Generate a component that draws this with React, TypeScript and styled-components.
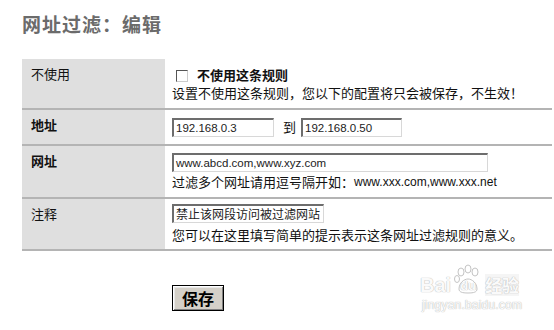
import React from "react";
import styled, { createGlobalStyle } from "styled-components";

const Global = createGlobalStyle`
  html, body {
    margin: 0;
    padding: 0;
    background: #fff;
  }
  body {
    font-family: "Noto Sans CJK SC", "Liberation Sans", sans-serif;
    font-size: 13px;
    color: #111;
  }
`;

const Page = styled.div`
  position: relative;
  width: 554px;
  height: 330px;
  overflow: hidden;
  padding: 12px 0 0 22px;
  box-sizing: border-box;
`;

const Title = styled.h1`
  margin: 0;
  font-size: 19px;
  line-height: 24px;
  font-weight: bold;
  color: #6b6b6b;
  letter-spacing: 1px;
`;

const Table = styled.div`
  margin-top: 23px;
  width: 530px;
`;

const Row = styled.div<{ $h: number }>`
  display: grid;
  grid-template-columns: 143px 1fr;
  height: ${(p) => p.$h}px;
  border-bottom: 2px solid #b4b4b4;
`;

const Label = styled.div<{ $bold?: boolean }>`
  background: #dfdfdf;
  padding: 7px 0 0 9px;
  line-height: 16px;
  font-size: 13px;
  font-weight: ${(p) => (p.$bold ? "bold" : "normal")};
`;

const Field = styled.div<{ $gap?: number }>`
  display: flex;
  flex-direction: column;
  justify-content: center;
  gap: ${(p) => p.$gap ?? 0}px;
  padding-left: 7px;
`;

const Line = styled.div`
  display: flex;
  align-items: center;
  line-height: 18px;
  white-space: nowrap;
`;

const Strong = styled.span`
  font-weight: bold;
`;

const Latin = styled.span`
  font-family: "Liberation Sans", Arial, sans-serif;
  font-size: 12px;
`;

const Check = styled.span`
  display: inline-block;
  width: 10px;
  height: 10px;
  margin: 2px 9px 0 4px;
  border-top: 1px solid #555;
  border-left: 1px solid #555;
  border-right: 1px solid #ccc;
  border-bottom: 1px solid #ccc;
  background: #fff;
`;

const Input = styled.div<{ $w: number; $cjk?: boolean }>`
  box-sizing: border-box;
  width: ${(p) => p.$w}px;
  height: 19px;
  padding: 0 2px;
  border-top: 2px solid #6d6d6d;
  border-left: 2px solid #6d6d6d;
  border-right: 1px solid #d8d8d8;
  border-bottom: 1px solid #d8d8d8;
  background: #fff;
  line-height: 16px;
  white-space: nowrap;
  overflow: hidden;
  font-family: ${(p) =>
    p.$cjk
      ? `"Noto Sans CJK SC", sans-serif`
      : `"Liberation Sans", Arial, sans-serif`};
  font-size: ${(p) => (p.$cjk ? 12 : 11.5)}px;
  color: #222;
`;

const To = styled.span`
  margin: 0 5px 0 9px;
`;

const Actions = styled.div`
  padding: 34px 0 0 150px;
`;

const Button = styled.button`
  width: 52px;
  height: 26px;
  padding: 0;
  background: #d4d0c8;
  border: 1px solid #000;
  box-shadow: inset 1px 1px 0 #fff, inset -1px -1px 0 #808080,
    inset 2px 2px 0 #e8e8e8;
  font-family: "Noto Sans CJK SC", sans-serif;
  font-size: 16px;
  font-weight: bold;
  color: #000;
  line-height: 22px;
`;

const Watermark = styled.div`
  position: absolute;
  left: 420px;
  top: 268px;
  width: 122px;
  height: 52px;
  color: rgba(255, 255, 255, 0.95);
  text-shadow: 0 0 1px #bdbdbd, 0 0 1px #bdbdbd;
  font-family: "Liberation Sans", Arial, sans-serif;
`;

const Mark = styled.div`
  display: flex;
  align-items: flex-end;
  font-size: 20px;
  font-weight: bold;
  line-height: 22px;
`;

const Paw = styled.span`
  position: relative;
  display: inline-flex;
  justify-content: center;
  width: 30px;
  height: 28px;
  font-size: 13px;
  line-height: 36px;
  margin: 0 2px;
`;

const PawIcon = styled.svg`
  position: absolute;
  left: 0;
  top: -4px;
`;

const PawText = styled.span`
  position: relative;
`;

const MarkCjk = styled.span`
  font-family: "Noto Sans CJK SC", sans-serif;
  font-size: 17px;
  background: rgba(235, 235, 235, 0.5);
`;

const Url = styled.div`
  font-size: 12px;
  letter-spacing: 0.2px;
  margin-top: 2px;
  padding-left: 2px;
`;

export default function App() {
  return (
    <Page>
      <Global />
      <Title>网址过滤：编辑</Title>
      <Table>
        <Row $h={49}>
          <Label>不使用</Label>
          <Field>
            <Line>
              <Check />
              <Strong>不使用这条规则</Strong>
            </Line>
            <Line>设置不使用这条规则，您以下的配置将只会被保存，不生效！</Line>
          </Field>
        </Row>
        <Row $h={34}>
          <Label $bold>地址</Label>
          <Field>
            <Line>
              <Input $w={102}>192.168.0.3</Input>
              <To>到</To>
              <Input $w={101}>192.168.0.50</Input>
            </Line>
          </Field>
        </Row>
        <Row $h={51}>
          <Label $bold>网址</Label>
          <Field $gap={1}>
            <Input $w={316}>www.abcd.com,www.xyz.com</Input>
            <Line>
              过滤多个网址请用逗号隔开如：
              <Latin>www.xxx.com,www.xxx.net</Latin>
            </Line>
          </Field>
        </Row>
        <Row $h={50}>
          <Label>注释</Label>
          <Field $gap={3}>
            <Input $w={152} $cjk>
              禁止该网段访问被过滤网站
            </Input>
            <Line>您可以在这里填写简单的提示表示这条网址过滤规则的意义。</Line>
          </Field>
        </Row>
      </Table>
      <Actions>
        <Button type="button">保存</Button>
      </Actions>
      <Watermark>
        <Mark>
          Bai
          <Paw>
            <PawIcon width="30" height="30" viewBox="0 0 30 30">
              <g fill="none" stroke="#c4c4c4" strokeWidth="1">
                <ellipse cx="8" cy="8" rx="3" ry="4" />
                <ellipse cx="15" cy="5" rx="3" ry="4" />
                <ellipse cx="22" cy="8" rx="3" ry="4" />
                <ellipse cx="4" cy="15" rx="2.5" ry="3.5" />
                <path d="M6 25c0-6 5-10 9-10s9 4 9 10c0 3-3 4-9 4s-9-1-9-4z" />
              </g>
            </PawIcon>
            <PawText>du</PawText>
          </Paw>
          <MarkCjk>经验</MarkCjk>
        </Mark>
        <Url>jingyan.baidu.com</Url>
      </Watermark>
    </Page>
  );
}
